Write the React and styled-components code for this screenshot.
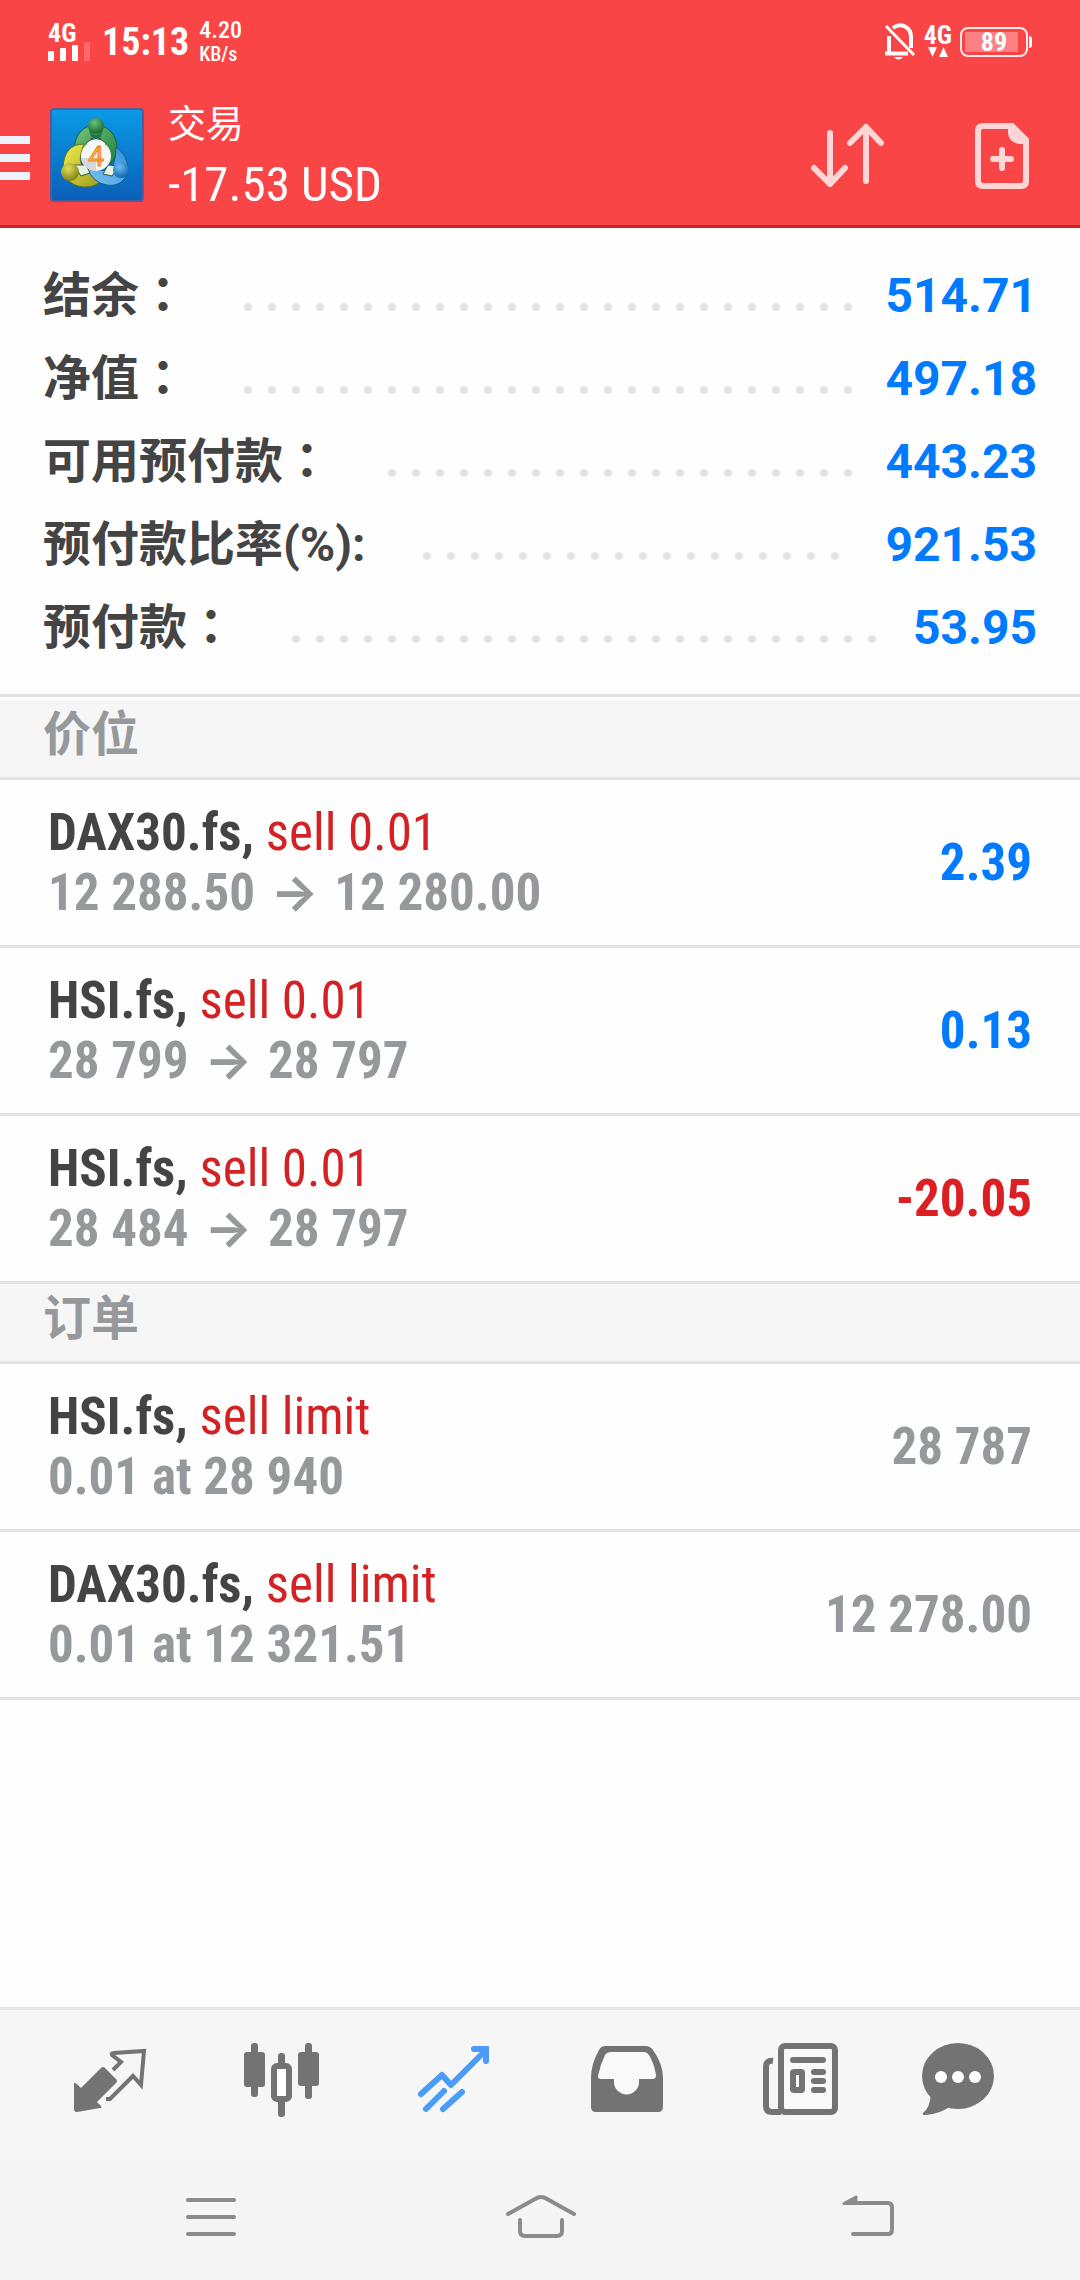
import React from 'react'
import styled, { createGlobalStyle } from 'styled-components';

const GlobalStyle = createGlobalStyle`
  * {
    box-sizing: border-box;
  }
  body {
    margin: 0;
    background: #fefefe;
    color: #444;
    font-family: Roboto, "Noto Sans CJK SC", sans-serif;
  }
  button {
    border: 0;
    padding: 0;
    background: none;
    color: inherit;
    font: inherit;
    cursor: pointer;
  }
  svg {
    display: block;
  }
`;

const narrow = '"Roboto Condensed", "Liberation Sans Narrow", Roboto, "Noto Sans CJK SC", sans-serif';

const Page = styled.div`
  min-height: 100vh;
  display: flex;
  flex-direction: column;
`;

const Header = styled.header`
  background: #fa4547;
  border-bottom: 3px solid #c9252a;
  color: #fff;
`;

const StatusBar = styled.div`
  display: flex;
  justify-content: space-between;
  align-items: center;
  height: 84px;
  padding: 0 48px;
`;

const StatusGroup = styled.div`
  display: flex;
  align-items: center;
  gap: ${props => props.$gap}px;
`;

const Network = styled.div`
  display: flex;
  flex-direction: column;
  font-size: 26px;
  line-height: 18px;
  font-weight: 700;
  font-family: ${narrow};
`;

const Clock = styled.div`
  font-family: ${narrow};
  font-size: 38px;
  font-weight: 700;
`;

const Speed = styled.div`
  font-family: ${narrow};
  font-size: 20px;
  line-height: 24px;
  font-weight: 500;
  div:first-child {
    font-size: 24px;
  }
`;

const Battery = styled.div`
  display: flex;
  align-items: center;
  gap: 1px;
  &::after {
    content: '';
    width: 3px;
    height: 12px;
    background: #fff;
    border-radius: 0 3px 3px 0;
  }
`;

const BatteryBody = styled.div`
  width: 68px;
  height: 30px;
  padding: 3px;
  border: 2px solid #ffe9e9;
  border-radius: 8px;
`;

const BatteryLevel = styled.div`
  height: 20px;
  background: linear-gradient(90deg, #fd8084 92%, transparent 92%);
  font-family: ${narrow};
  font-size: 26px;
  line-height: 20px;
  font-weight: 700;
  text-align: center;
`;

const AppBar = styled.div`
  display: flex;
  align-items: center;
  height: 141px;
  padding-right: 51px;
`;

const MenuButton = styled.button`
  display: grid;
  gap: 10px;
  width: 30px;
  margin: 6px 20px 0 0;
  span {
    height: 8px;
    background: #eef3fb;
  }
`;

const Heading = styled.div`
  flex: 1;
  margin-left: 24px;
  padding-top: 8px;
`;

const Title = styled.h1`
  margin: 0;
  font-size: 38px;
  line-height: 52px;
  font-weight: 400;
`;

const Profit = styled.div`
  font-family: ${narrow};
  font-size: 49px;
  line-height: 70px;
`;

const Actions = styled.div`
  display: flex;
  gap: 90px;
  padding-top: 3px;
  color: #ffd6d7;
`;

const Main = styled.main`
  flex: 1;
`;

const Summary = styled.dl`
  margin: 0 0 3px;
  padding: 26px 43px 25px 43px;
  border-bottom: 3px solid #e3e3e3;
`;

const SummaryRow = styled.div`
  display: flex;
  align-items: center;
  font-size: 48px;
  line-height: 83px;
  font-weight: 700;
`;

const Label = styled.dt`
  height: 83px;
`;

/* full-width colon that sits in the middle of its cell */
const Colon = styled.span`
  font-family: "Noto Sans CJK TC", sans-serif;
  line-height: 1;
`;

const Leader = styled.span`
  flex: 1;
  margin: 22px 22px 0 49px;
  &::before {
    content: '';
    display: block;
    width: round(down, 100%, 24px);
    height: 8px;
    background: radial-gradient(circle, #e3e3e3 3px, #e3e3e300 5px);
    background-size: 24px 8px;
  }
`;

const Amount = styled.dd`
  margin: 0;
  color: #007aff;
`;

const SectionTitle = styled.h2`
  height: 80px;
  margin: 0;
  padding: 0 43px;
  background: #f6f6f6;
  border-bottom: 3px solid #e3e3e3;
  color: #96999b;
  font-size: 48px;
  line-height: 70px;
  font-weight: 700;
`;

const List = styled.ul`
  margin: 0;
  padding: 0;
  list-style: none;
`;

const Item = styled.li`
  display: flex;
  justify-content: space-between;
  align-items: center;
  height: 168px;
  padding: 0 48px;
  border-bottom: 3px solid #e3e3e3;
  color: #96999b;
  font-family: ${narrow};
  font-size: 51px;
  line-height: 60px;
  font-weight: 700;
`;

const Symbol = styled.div`
  color: #444;
`;

const Side = styled.span`
  color: #d32124;
  font-weight: 400;
`;

const Arrow = styled.span`
  margin: 0 4px;
  font-family: Inter, sans-serif;
  font-size: 50px;
  line-height: 1;
`;

const tones = { up: '#007aff', down: '#dc1f22', flat: '#96999b' };

const Result = styled.div`
  color: ${props => tones[props.$tone]};
`;

const Tabs = styled.nav`
  display: grid;
  grid-template-columns: repeat(6, 1fr);
  height: 153px;
  padding: 0 24px;
  background: #f6f6f6;
  border-top: 3px solid #e5e5e5;
`;

const Tab = styled.button`
  display: flex;
  justify-content: center;
  padding-top: 21px;
  color: ${props => props.$active ? '#4a9cf8' : '#737373'};
`;

const SystemNav = styled.nav`
  display: grid;
  grid-template-columns: repeat(3, 1fr);
  height: 120px;
  padding: 0 48px;
  background: #f5f5f5;
  color: #8b8b8b;
`;

const NavButton = styled.button`
  display: flex;
  justify-content: center;
  padding-top: 21px;
`;

const account = [
  { label: '结余', colon: '：', value: '514.71' },
  { label: '净值', colon: '：', value: '497.18' },
  { label: '可用预付款', colon: '：', value: '443.23' },
  { label: '预付款比率(%):', value: '921.53' },
  { label: '预付款', colon: '：', value: '53.95' },
];

const positions = [
  { symbol: 'DAX30.fs', side: 'sell 0.01', open: '12 288.50', current: '12 280.00', result: '2.39', tone: 'up' },
  { symbol: 'HSI.fs', side: 'sell 0.01', open: '28 799', current: '28 797', result: '0.13', tone: 'up' },
  { symbol: 'HSI.fs', side: 'sell 0.01', open: '28 484', current: '28 797', result: '-20.05', tone: 'down' },
];

const orders = [
  { symbol: 'HSI.fs', side: 'sell limit', open: '0.01 at 28 940', result: '28 787', tone: 'flat' },
  { symbol: 'DAX30.fs', side: 'sell limit', open: '0.01 at 12 321.51', result: '12 278.00', tone: 'flat' },
];

const SignalIcon = () => (
  <svg width="44" height="19" viewBox="0 0 44 19" fill="#fff">
    <rect x="0" y="9" width="6" height="10" rx="1" />
    <rect x="12" y="6" width="6" height="13" rx="1" />
    <rect x="24" y="3" width="6" height="16" rx="1" />
    <rect x="36" y="0" width="6" height="19" rx="1" opacity="0.2" />
  </svg>
);

const BellOffIcon = () => (
  <svg width="32" height="38" viewBox="0 0 32 38" fill="none" stroke="#fff" strokeWidth="4">
    <path d="M5 30V13M9 5C17-1 27 4 27 14v11M1 30.500H24" />
    <path d="M2 3 30 32" strokeWidth="3" />
    <path d="M10 34h9q-4.500 5-9 0z" fill="#fff" stroke="none" />
  </svg>
);

const TrafficIcon = () => (
  <svg width="28" height="14" viewBox="0 0 28 14" fill="#fff">
    <path d="M4 3h9l-4.500 10zM15 13h9L19.500 3z" />
  </svg>
);

const Logo = () => (
  <svg width="94" height="94" viewBox="0 0 94 94">
    <defs>
      <linearGradient id="sky" x1="0" y1="0" x2="0" y2="1">
        <stop offset="0" stopColor="#0a9be6" />
        <stop offset="1" stopColor="#0a5fb8" />
      </linearGradient>
      <linearGradient id="green" x1="0" y1="0" x2="1" y2="1">
        <stop offset="0" stopColor="#7cc47c" />
        <stop offset="1" stopColor="#1e7f38" />
      </linearGradient>
      <linearGradient id="yellow" x1="0" y1="0" x2="1" y2="1">
        <stop offset="0" stopColor="#f3ee4e" />
        <stop offset="1" stopColor="#9a9a1c" />
      </linearGradient>
      <linearGradient id="blue" x1="1" y1="0" x2="0" y2="1">
        <stop offset="0" stopColor="#2f93d8" />
        <stop offset="1" stopColor="#7cc2f0" />
      </linearGradient>
      <radialGradient id="greenHead" cx="0.4" cy="0.3" r="0.7">
        <stop offset="0" stopColor="#6cc07e" />
        <stop offset="1" stopColor="#116b2c" />
      </radialGradient>
      <radialGradient id="yellowHead" cx="0.4" cy="0.3" r="0.7">
        <stop offset="0" stopColor="#e2e05a" />
        <stop offset="1" stopColor="#808216" />
      </radialGradient>
      <radialGradient id="blueHead" cx="0.4" cy="0.3" r="0.7">
        <stop offset="0" stopColor="#6cc0f5" />
        <stop offset="1" stopColor="#1166ae" />
      </radialGradient>
    </defs>
    <rect x="1" y="1" width="92" height="92" rx="3" fill="url(#sky)" stroke="#4f5d9c" strokeWidth="2" />
    <path d="M25 47C22 28 33 17 46 17S70 30 66 46Q64 54 59 56L54 34Q46 24 38 34L34 50z" fill="url(#green)" stroke="#14602e" />
    <path d="M34 36Q14 36 13 60C14 72 24 79 35 79Q46 79 52 72L33 58Q27 54 34 36z" fill="url(#yellow)" stroke="#5f7420" />
    <path d="M66 39Q77 46 78 61C77 73 67 79 57 77Q43 75 37 60L58 63Q66 58 66 39z" fill="url(#blue)" stroke="#125a98" />
    <path d="M36 35q10-9 20 0l-2 9H38zM24 57l12 0 4 8-9 3zM69 58l-11-1-5 9 9 2z" fill="#e8f0e0" stroke="#2a5a50" />
    <circle cx="46" cy="18" r="8" fill="url(#greenHead)" />
    <path d="M39 22q7 9 14 0l-2 7H41z" fill="#237a3c" />
    <circle cx="20" cy="64" r="9" fill="url(#yellowHead)" />
    <circle cx="71" cy="62" r="8" fill="url(#blueHead)" />
    <circle cx="46" cy="48" r="15" fill="#f7f7f7" />
    <path d="M31 50H46V63A15 15 0 0 1 31 50z" fill="#d5d7dc" />
    <text x="46" y="58" textAnchor="middle" fontFamily="Roboto" fontSize="28" fill="#fbc04a" stroke="#ee8422" strokeWidth="1">4</text>
  </svg>
);

const SortIcon = () => (
  <svg width="74" height="66" viewBox="0 0 74 66" fill="none" stroke="currentColor" strokeWidth="6" strokeLinecap="round" strokeLinejoin="round">
    <path d="M19 10V61M3 45 19 61 34 45M55 58V4M39 20 55 4 70 20" />
  </svg>
);

const NewOrderIcon = () => (
  <svg width="54" height="66" viewBox="0 0 54 66" fill="none" stroke="currentColor" strokeWidth="6">
    <path d="M8 3H37L51 17V58Q51 63 46 63H8Q3 63 3 58V8Q3 3 8 3z" />
    <path d="M33 3V10Q34 20 45 21H51V16L38 3z" fill="currentColor" stroke="none" />
    <path d="M27 27V45M18 36H36" strokeLinecap="round" />
  </svg>
);

const QuotesIcon = () => (
  <svg width="96" height="96" viewBox="0 0 96 96">
    <path d="M12 52Q13 51 19 57L39 37Q41 35 43 37L54 48Q56 50 54 52L35 71 39 75Q40 77 38 77L15 81Q12 81 12 78z" fill="currentColor" />
    <path d="M51 39 59 31 50 24Q49 22 52 22L82 20 79 54 71 45 48 68H44" fill="none" stroke="currentColor" strokeWidth="4" />
  </svg>
);

const ChartIcon = () => (
  <svg width="96" height="96" viewBox="0 0 96 96" fill="currentColor">
    <rect x="17" y="12" width="7" height="54" rx="3" />
    <rect x="10" y="21" width="21" height="35" rx="3" />
    <rect x="71" y="12" width="7" height="56" rx="3" />
    <rect x="64" y="21" width="21" height="34" rx="3" />
    <rect x="44" y="22" width="7" height="64" rx="3" />
    <rect x="40" y="35" width="15" height="33" rx="3" fill="#fff" stroke="currentColor" strokeWidth="6" />
  </svg>
);

const TradeIcon = () => (
  <svg width="96" height="96" viewBox="0 0 96 96" fill="none" stroke="currentColor" strokeWidth="6" strokeLinecap="round" strokeLinejoin="round">
    <path d="M15 63 36 44 45 54 80 19M68 18H80V30" />
    <path d="M20 78 38 60M37 78 56 61" />
    <path d="M70 16H82V28z" fill="currentColor" strokeWidth="2" />
  </svg>
);

const HistoryIcon = () => (
  <svg width="96" height="96" viewBox="0 0 96 96">
    <path d="M24 15H68Q72 15 75 19Q85 33 85 47V76Q85 81 80 81H18Q13 81 13 76V47Q13 33 21 19Q23 15 27 15z" fill="currentColor" />
    <path d="M33 21H66Q69 21 71 24Q76 32 78 44Q78 48 75 48H61V51A12 12 0 0 1 36 51V48H23Q20 48 20 45Q22 34 27 24Q29 21 33 21z" fill="#f9f9f9" />
  </svg>
);

const NewsIcon = () => (
  <svg width="96" height="96" viewBox="0 0 96 96" fill="none" stroke="currentColor" strokeWidth="6">
    <rect x="31" y="15" width="54" height="66" rx="4" fill="#f9f9f9" />
    <path d="M23 30Q16 29 16 36V75Q16 81 22 81H31" />
    <path d="M43 29H73M64 41H73M64 50H73M64 59H73" strokeLinecap="round" />
    <rect x="43" y="41" width="9" height="18" rx="1" />
  </svg>
);

const ChatIcon = () => (
  <svg width="96" height="96" viewBox="0 0 96 96" fill="currentColor">
    <ellipse cx="36" cy="45" rx="36" ry="33" />
    <path d="M9 62Q8 77 1 82Q0 84 3 84Q19 83 30 74z" />
    <g fill="#fff">
      <circle cx="19" cy="46" r="6" />
      <circle cx="36" cy="46" r="6" />
      <circle cx="53" cy="46" r="6" />
    </g>
  </svg>
);

const RecentsIcon = () => (
  <svg width="72" height="72" viewBox="0 0 72 72" fill="none" stroke="currentColor" strokeWidth="4" strokeLinecap="round">
    <path d="M12 19H58M12 36H58M12 53H58" />
  </svg>
);

const HomeIcon = () => (
  <svg width="72" height="72" viewBox="0 0 72 72" fill="none" stroke="currentColor" strokeWidth="4" strokeLinecap="round">
    <path d="M4 33 31 18Q37 14 43 18L70 33M16 39V50Q16 55 21 55H53Q58 55 58 50V39" />
  </svg>
);

const BackIcon = () => (
  <svg width="72" height="72" viewBox="0 0 72 72" fill="none" stroke="currentColor" strokeWidth="4" strokeLinecap="round" strokeLinejoin="round">
    <path d="M14 22H56Q60 22 60 26V49Q60 53 56 53H21" />
    <path d="M12 22.500 24 16V22.500z" fill="currentColor" strokeWidth="3" />
  </svg>
);

const tabs = [
  { name: '行情', icon: <QuotesIcon /> },
  { name: '图表', icon: <ChartIcon /> },
  { name: '交易', icon: <TradeIcon />, active: true },
  { name: '历史', icon: <HistoryIcon /> },
  { name: '新闻', icon: <NewsIcon /> },
  { name: '消息', icon: <ChatIcon /> },
];

function TradeList({ items }) {
  return (
    <List>
      {items.map((item, i) => (
        <Item key={i}>
          <div>
            <Symbol>{item.symbol}, <Side>{item.side}</Side></Symbol>
            <div>
              {item.open}
              {item.current && <> <Arrow>→</Arrow> {item.current}</>}
            </div>
          </div>
          <Result $tone={item.tone}>{item.result}</Result>
        </Item>
      ))}
    </List>
  );
}

function App() {
  return (
    <Page>
      <GlobalStyle />
      <Header>
        <StatusBar>
          <StatusGroup $gap={10}>
            <Network>
              4G
              <SignalIcon />
            </Network>
            <Clock>15:13</Clock>
            <Speed>
              <div>4.20</div>
              <div>KB/s</div>
            </Speed>
          </StatusGroup>
          <StatusGroup $gap={8}>
            <BellOffIcon />
            <Network>
              4G
              <TrafficIcon />
            </Network>
            <Battery>
              <BatteryBody>
                <BatteryLevel>89</BatteryLevel>
              </BatteryBody>
            </Battery>
          </StatusGroup>
        </StatusBar>
        <AppBar>
          <MenuButton aria-label="菜单">
            <span />
            <span />
            <span />
          </MenuButton>
          <Logo />
          <Heading>
            <Title>交易</Title>
            <Profit>-17.53 USD</Profit>
          </Heading>
          <Actions>
            <button aria-label="排序"><SortIcon /></button>
            <button aria-label="新订单"><NewOrderIcon /></button>
          </Actions>
        </AppBar>
      </Header>
      <Main>
        <Summary>
          {account.map(row => (
            <SummaryRow key={row.label}>
              <Label>{row.label}{row.colon && <Colon>{row.colon}</Colon>}</Label>
              <Leader />
              <Amount>{row.value}</Amount>
            </SummaryRow>
          ))}
        </Summary>
        <SectionTitle>价位</SectionTitle>
        <TradeList items={positions} />
        <SectionTitle>订单</SectionTitle>
        <TradeList items={orders} />
      </Main>
      <Tabs>
        {tabs.map(tab => (
          <Tab key={tab.name} aria-label={tab.name} $active={tab.active}>{tab.icon}</Tab>
        ))}
      </Tabs>
      <SystemNav>
        <NavButton aria-label="最近任务"><RecentsIcon /></NavButton>
        <NavButton aria-label="主屏幕"><HomeIcon /></NavButton>
        <NavButton aria-label="返回"><BackIcon /></NavButton>
      </SystemNav>
    </Page>
  );
}

export default App;
